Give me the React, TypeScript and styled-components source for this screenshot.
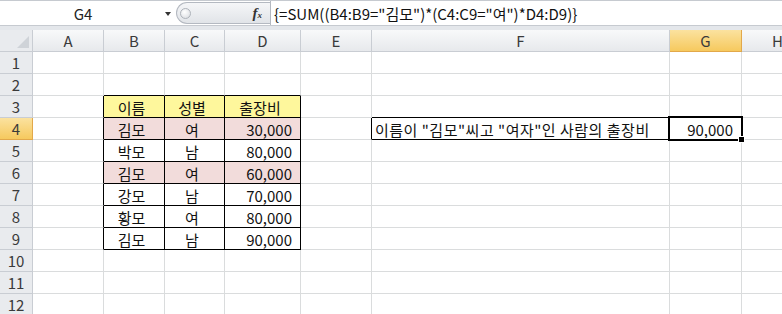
import React from 'react'
import styled, { createGlobalStyle, css } from 'styled-components'

const GlobalStyle = createGlobalStyle`
    html, body {
        margin: 0;
        padding: 0;
        background: #ffffff;
        overflow: hidden;
    }
    body {
        font-family: "Noto Sans CJK KR", "Noto Sans", sans-serif;
    }
`

const Window = styled.div`
    width: 782px;
    height: 314px;
    overflow: hidden;
    background: #ffffff;
`

const FormulaBar = styled.div`
    display: flex;
    height: 26px;
    box-sizing: border-box;
    border-top: 1px solid #c6cad0;
    border-bottom: 1px solid #c6cad0;
    background: #ffffff;
`

const NameBox = styled.div`
    width: 160px;
    display: flex;
    align-items: center;
    justify-content: center;
    font-size: 15px;
    color: #222;
    padding-left: 6px;
    box-sizing: border-box;
`

const DropArrow = styled.div`
    width: 16px;
    display: flex;
    align-items: center;
    justify-content: center;
    &::after {
        content: '';
        border-left: 3.5px solid transparent;
        border-right: 3.5px solid transparent;
        border-top: 4px solid #333;
        margin-top: 1px;
    }
`

const Splitter = styled.div`
    width: 94px;
    display: flex;
    align-items: center;
    justify-content: space-between;
    box-sizing: border-box;
    margin: 1px 0;
    border: 1px solid #b4b9c1;
    border-right: none;
    border-radius: 12px 0 0 12px;
    background: linear-gradient(#f5f6f8, #e1e4e8);
    padding: 0 8px 0 3px;
`

const Grip = styled.div`
    width: 11px;
    height: 11px;
    border-radius: 50%;
    border: 1px solid #aeb3ba;
    background: radial-gradient(circle at 40% 35%, #ffffff, #d6d9de);
    box-sizing: border-box;
`

const Fx = styled.div`
    font-family: "Liberation Serif", "DejaVu Serif", serif;
    font-style: italic;
    font-weight: bold;
    font-size: 15px;
    color: #333;
    line-height: 1;
    sub {
        font-size: 9px;
        vertical-align: baseline;
        font-style: italic;
    }
`

const FormulaInput = styled.div`
    flex: 1;
    display: flex;
    align-items: center;
    border-left: 1px solid #b4b9c1;
    padding-left: 3px;
    font-size: 15px;
    color: #111;
    white-space: nowrap;
`

const Gap = styled.div`
    height: 4px;
    background: #e4e7eb;
`

const Sheet = styled.div`
    display: grid;
    grid-template-columns: 33px 71px 61px 60px 76px 71px 298px 72px 72px;
    grid-auto-rows: 22px;
    width: 814px;
`

const headerBase = css<{ $active?: boolean }>`
    box-sizing: border-box;
    display: flex;
    align-items: center;
    justify-content: center;
    font-size: 15px;
    color: #3a3a3a;
    border-right: 1px solid ${p => (p.$active ? '#e2a84a' : '#c9cdd3')};
    border-bottom: 1px solid ${p => (p.$active ? '#e2a84a' : '#c9cdd3')};
    background: ${p =>
        p.$active
            ? 'linear-gradient(#fbe29f, #f6c95e)'
            : 'linear-gradient(#f8f9fa, #e7e9ec)'};
`

const ColHeader = styled.div<{ $active?: boolean }>`
    ${headerBase}
`

const RowHeader = styled.div<{ $active?: boolean }>`
    ${headerBase}
    background: ${p =>
        p.$active ? 'linear-gradient(#fbe29f, #f6c95e)' : '#e9ebee'};
`

const Corner = styled.div`
    position: relative;
    box-sizing: border-box;
    background: #e9ebee;
    border-right: 1px solid #c9cdd3;
    border-bottom: 1px solid #c9cdd3;
    &::after {
        content: '';
        position: absolute;
        right: 3px;
        bottom: 3px;
        border-left: 12px solid transparent;
        border-bottom: 12px solid #cfd3d8;
    }
`

const Cell = styled.div<{
    $fill?: string
    $align?: 'left' | 'center' | 'right'
    $rb: string
    $bb: string
    $selected?: boolean
    $wide?: boolean
}>`
    position: relative;
    z-index: ${p => (p.$selected ? 2 : 0)};
    box-sizing: border-box;
    display: flex;
    align-items: center;
    justify-content: ${p =>
        p.$align === 'right' ? 'flex-end' : p.$align === 'center' ? 'center' : 'flex-start'};
    padding: 1px 8px 0 3px;
    font-size: 15px;
    letter-spacing: ${p => (p.$wide ? '0.5px' : 'normal')};
    color: #111;
    white-space: nowrap;
    background: ${p => p.$fill || '#ffffff'};
    border-right: 1px solid ${p => p.$rb};
    border-bottom: 1px solid ${p => p.$bb};
`

const Selection = styled.div`
    position: absolute;
    top: -2px;
    left: -2px;
    right: -2px;
    bottom: -2px;
    border: 2px solid #000;
    box-shadow: inset 0 0 0 1px #fff;
    pointer-events: none;
    &::after {
        content: '';
        position: absolute;
        right: -4px;
        bottom: -4px;
        width: 5px;
        height: 5px;
        background: #000;
        border: 1px solid #fff;
    }
`

const COLS = ['A', 'B', 'C', 'D', 'E', 'F', 'G', 'H']
const YELLOW = '#fef79c'
const PINK = '#f2dcdb'

type CellData = {
    v: string
    align?: 'left' | 'center' | 'right'
    fill?: string
    wide?: boolean
}

const people = [
    ['김모', '여', '30,000', PINK],
    ['박모', '남', '80,000', ''],
    ['김모', '여', '60,000', PINK],
    ['강모', '남', '70,000', ''],
    ['황모', '여', '80,000', ''],
    ['김모', '남', '90,000', ''],
]

const cells: Record<string, CellData> = {
    B3: { v: '이름', align: 'center', fill: YELLOW },
    C3: { v: '성별', align: 'center', fill: YELLOW },
    D3: { v: '출장비', align: 'center', fill: YELLOW },
    F4: { v: '이름이 "김모"씨고 "여자"인 사람의 출장비', align: 'left', wide: true },
    G4: { v: '90,000', align: 'right' },
}
people.forEach(([name, sex, cost, fill], i) => {
    const r = i + 4
    cells['B' + r] = { v: name, align: 'center', fill: fill || undefined }
    cells['C' + r] = { v: sex, align: 'center', fill: fill || undefined }
    cells['D' + r] = { v: cost, align: 'right', fill: fill || undefined }
})

// cells that carry a thin black border on every side
const boxed = (r: number, c: number) =>
    (r >= 3 && r <= 9 && c >= 1 && c <= 3) || (r === 4 && (c === 5 || c === 6))

const GRID = '#dadcdd'
const ACTIVE = 'G4'

const App: React.FC = () => {
    const rows = Array.from({ length: 12 }, (_, i) => i + 1)
    return (
        <Window>
            <GlobalStyle />
            <FormulaBar>
                <NameBox>{ACTIVE}</NameBox>
                <DropArrow />
                <Splitter>
                    <Grip />
                    <Fx>
                        f<sub>x</sub>
                    </Fx>
                </Splitter>
                <FormulaInput>{'{=SUM((B4:B9="김모")*(C4:C9="여")*D4:D9)}'}</FormulaInput>
            </FormulaBar>
            <Gap />
            <Sheet>
                <Corner />
                {COLS.map(c => (
                    <ColHeader key={c} $active={c === ACTIVE[0]}>
                        {c}
                    </ColHeader>
                ))}
                {rows.map(r => (
                    <React.Fragment key={r}>
                        <RowHeader $active={String(r) === ACTIVE.slice(1)}>{r}</RowHeader>
                        {COLS.map((c, ci) => {
                            const data = cells[c + r]
                            const right = boxed(r, ci) || boxed(r, ci + 1)
                            const bottom = boxed(r, ci) || boxed(r + 1, ci)
                            const selected = c + r === ACTIVE
                            return (
                                <Cell
                                    key={c}
                                    $fill={data?.fill}
                                    $align={data?.align}
                                    $wide={data?.wide}
                                    $rb={right ? '#000' : GRID}
                                    $bb={bottom ? '#000' : GRID}
                                    $selected={selected}
                                >
                                    {data?.v}
                                    {selected && <Selection />}
                                </Cell>
                            )
                        })}
                    </React.Fragment>
                ))}
            </Sheet>
        </Window>
    )
}

export default App
